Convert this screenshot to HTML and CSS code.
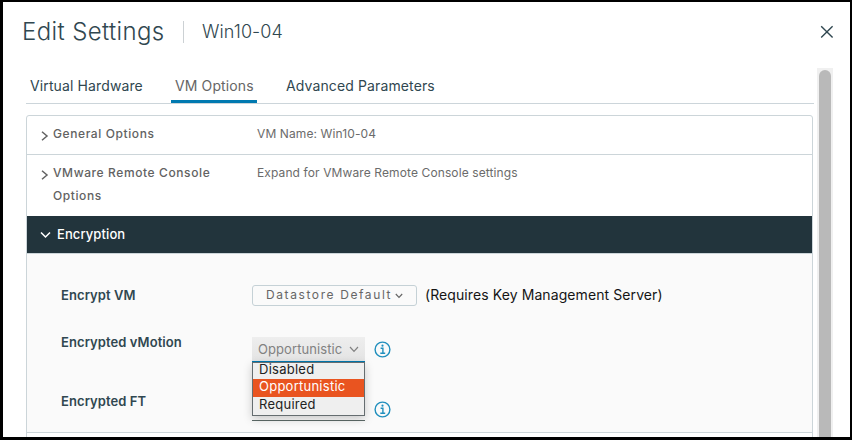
FILE: index.html
```html
<!DOCTYPE html>
<html lang="en">
<head>
<meta charset="utf-8">
<title>Edit Settings</title>
<link rel="stylesheet" href="styles.css">
</head>
<body>
<div class="dialog">
  <header class="header">
    <h1 class="title">Edit Settings</h1>
    <span class="vm-name">Win10-04</span>
    <svg class="close" width="14" height="14" viewBox="0 0 14 14"><path d="M1.2 1.2 12.6 12.6M12.6 1.2 1.2 12.6"/></svg>
  </header>
  <div class="main">
    <div class="content">
      <nav class="tabs">
        <span class="tab">Virtual Hardware</span>
        <span class="tab active">VM Options</span>
        <span class="tab">Advanced Parameters</span>
      </nav>
      <div class="accordion">
        <section class="row">
          <svg class="caret" width="8" height="10" viewBox="0 0 8 10"><path d="M1 .8 6 5 1 9.2"/></svg>
          <span class="name">General Options</span>
          <span class="value">VM Name: Win10-04</span>
        </section>
        <section class="row tall">
          <svg class="caret" width="8" height="10" viewBox="0 0 8 10"><path d="M1 .8 6 5 1 9.2"/></svg>
          <span class="name">VMware Remote Console Options</span>
          <span class="value">Expand for VMware Remote Console settings</span>
        </section>
        <section class="row open">
          <svg class="down" width="11" height="8" viewBox="0 0 11 8"><path d="M1 1.4 5.5 6 10 1.4"/></svg>
          <span class="open-name">Encryption</span>
        </section>
        <div class="panel">
          <div class="field">
            <span class="label">Encrypt VM</span>
            <span class="policy">Datastore Default<svg width="8" height="6" viewBox="0 0 8 6"><path d="M.8 1 4 4.3 7.2 1"/></svg></span>
            <span class="note">(Requires Key Management Server)</span>
          </div>
          <div class="field vmotion">
            <span class="label">Encrypted vMotion</span>
            <div class="select">
              <span>Opportunistic</span>
              <svg width="10" height="7" viewBox="0 0 10 7"><path d="M1 1 5 5.4 9 1"/></svg>
              <ul class="menu">
                <li>Disabled</li>
                <li class="selected">Opportunistic</li>
                <li>Required</li>
              </ul>
            </div>
            <svg class="info" width="17" height="17" viewBox="0 0 17 17"><circle cx="8.5" cy="8.5" r="7.4"/><path d="M6.6 7.3H8.9V12.2M6.3 12.2H11.2"/><circle class="dot" cx="8.5" cy="4.7" r="1.1"/></svg>
          </div>
          <div class="field ft">
            <span class="label">Encrypted FT</span>
            <div class="select-line"></div>
            <svg class="info" width="17" height="17" viewBox="0 0 17 17"><circle cx="8.5" cy="8.5" r="7.4"/><path d="M6.6 7.3H8.9V12.2M6.3 12.2H11.2"/><circle class="dot" cx="8.5" cy="4.7" r="1.1"/></svg>
          </div>
        </div>
      </div>
    </div>
    <div class="scrollbar"><div class="thumb"></div></div>
  </div>
</div>
</body>
</html>
```
FILE: styles.css
```css
* { box-sizing: border-box; }
body { margin: 0; font-family: Inter, "Liberation Sans", sans-serif; color: #304750; }
svg { flex: none; fill: none; stroke: currentColor; }
.dialog { width: 852px; height: 440px; overflow: hidden; border: solid #000; border-width: 2px 2px 3px 3px; background: #fff; display: flex; flex-direction: column; }
.header { height: 66px; flex: none; display: flex; align-items: flex-start; padding-left: 18px; }
.title { margin: 15px 0 0; padding-left: 1px; width: 162px; height: 30px; font-size: 24px; line-height: 30px; font-weight: 300; letter-spacing: .38px; white-space: nowrap; }
.vm-name { margin-top: 19px; height: 22px; width: 600px; padding-left: 18px; border-left: 1px solid #ccd1d4; font-size: 18px; line-height: 22px; font-weight: 300; letter-spacing: .08px; }
.close { margin: 23px 0 0 37px; stroke-width: 1.4; }
.main { flex: 1; min-height: 0; display: flex; }
.content { width: 788px; margin-left: 23px; flex: none; }
.tabs { display: flex; height: 36px; border-bottom: 1px solid #ccd5da; font-size: 14px; line-height: 36px; letter-spacing: .12px; white-space: nowrap; }
.tab { padding: 0 4px; margin-right: 25px; height: 36px; }
.tab:first-child { width: 120px; }
.tab.active { width: 86px; color: #666; border-bottom: 3px solid #0079b0; height: 35px; margin-right: 24px; padding-left: 4px; }
.tab:last-child { padding-left: 5px; margin: 0; }
.accordion { margin-top: 11px; width: 787px; border: 1px solid #ccd5d9; border-radius: 3px 3px 0 0; height: 330px; }
.row { display: flex; height: 39px; padding-left: 14px; border-bottom: 1px solid #ccd5d9; color: #626262; font-size: 12px; line-height: 23px; padding-top: 6px; }
.row.tall { height: 61px; border: 0; }
.caret { margin: 9px 4px 0 0; stroke-width: 1.5; }
.name { width: 204px; padding-right: 30px; font-weight: 500; letter-spacing: .6px; }
.value { letter-spacing: .11px; color: #6b6b6b; }
.row.open { height: 38px; padding: 0 0 0 13px; background: #22343c; color: #fff; align-items: center; font-size: 13px; font-weight: 500; letter-spacing: .1px; line-height: 36px; }
.row.open .open-name { margin-top: -1px; }
.down { margin: 0 6px 0 0; stroke-width: 1.5; }
.panel { background: #fafafa; height: 179px; padding-top: 31px; border-bottom: 1px solid #ccd5d9; }
.field { display: flex; padding-left: 34px; }
.label { width: 191px; font-size: 13px; line-height: 20px; font-weight: 600; letter-spacing: .08px; }
.policy { width: 165px; height: 21px; border: 1px solid #c5d1d6; border-radius: 3px; display: flex; align-items: center; padding: 0 0 2px 13px; font-size: 12px; line-height: 17px; letter-spacing: 1.6px; color: #666; white-space: nowrap; }
.policy svg { margin: 3px 0 0 3px; stroke-width: 1.2; }
.note { margin-left: 8px; font-size: 14px; line-height: 20px; letter-spacing: .09px; color: #151515; }
.vmotion { margin-top: 26px; }
.select { position: relative; margin-top: 5px; width: 113px; height: 25px; border-bottom: 1px solid #0079b0; background: linear-gradient(#eee, #e4e4e4); display: flex; align-items: center; padding-left: 6px; font-size: 13px; letter-spacing: .08px; color: #818181; }
.select svg { margin-left: 7px; stroke-width: 1.2; }
.menu { position: absolute; z-index: 1; left: 0; top: 25px; width: 113px; height: 54px; margin: 0; padding: 0; list-style: none; border: 1px solid #656d70; background: #efefef; color: #222; box-shadow: 0 3px 9px #0003; font-size: 13px; font-weight: 400; letter-spacing: .25px; }
.menu li { height: 16px; line-height: 13px; padding-left: 6px; }
.menu .selected { height: 18px; line-height: 14px; background: #e95420; color: #fff; }
.menu li:last-child { line-height: 14px; }
.info { color: #218fbd; margin: 9px 0 0 9px; stroke-width: 1.4; }
.info .dot { fill: currentColor; stroke: none; }
.ft { padding-top: 4px; margin-top: 25px; }
.ft .info { margin-top: 10px; }
.select-line { width: 113px; height: 30px; border-bottom: 1px solid #5d6b68; }
.scrollbar { width: 16px; margin-left: 3px; background: #f0f0f0; padding: 2px 2px 0; }
.thumb { width: 12px; height: 400px; border-radius: 6px; background: #b9b9b9; }
```
